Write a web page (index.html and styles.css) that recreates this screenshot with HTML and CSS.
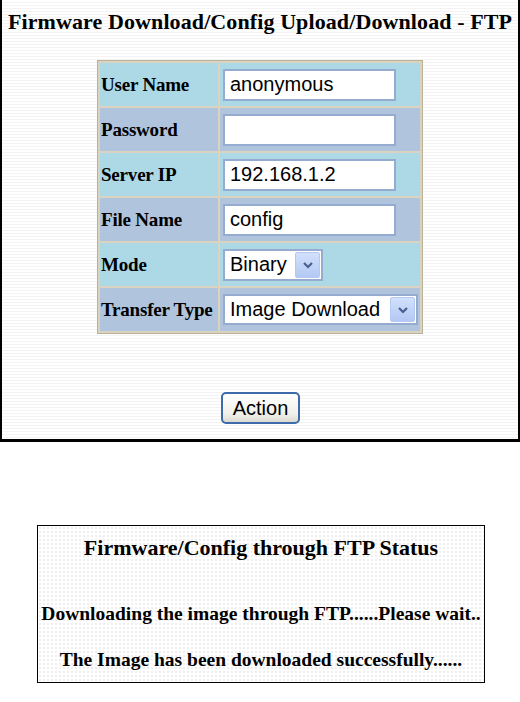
FILE: index.html
```html
<!DOCTYPE html>
<html>
<head>
<meta charset="utf-8">
<title>Firmware FTP</title>
<link rel="stylesheet" href="styles.css">
</head>
<body>
<div class="panel">
  <h1 class="title">Firmware Download/Config Upload/Download - FTP</h1>
  <table class="form">
    <tr class="odd"><td class="lbl">User Name</td><td class="val"><input class="txt" type="text" value="anonymous"></td></tr>
    <tr class="even"><td class="lbl">Password</td><td class="val"><input class="txt" type="password" value=""></td></tr>
    <tr class="odd"><td class="lbl">Server IP</td><td class="val"><input class="txt" type="text" value="192.168.1.2"></td></tr>
    <tr class="even"><td class="lbl">File Name</td><td class="val"><input class="txt" type="text" value="config"></td></tr>
    <tr class="odd"><td class="lbl">Mode</td><td class="val">
      <div class="sel sel-mode"><span class="sel-text">Binary</span><span class="arrow"><svg width="12" height="8" viewBox="0 0 12 8"><path d="M2 2 L6 6 L10 2" fill="none" stroke="#4a5f8c" stroke-width="2.2"/></svg></span></div>
    </td></tr>
    <tr class="even"><td class="lbl">Transfer Type</td><td class="val">
      <div class="sel sel-type"><span class="sel-text">Image Download</span><span class="arrow"><svg width="12" height="8" viewBox="0 0 12 8"><path d="M2 2 L6 6 L10 2" fill="none" stroke="#4a5f8c" stroke-width="2.2"/></svg></span></div>
    </td></tr>
  </table>
  <div class="actions"><button class="btn" type="button">Action</button></div>
</div>

<div class="status">
  <h2 class="status-title">Firmware/Config through FTP Status</h2>
  <p class="msg msg-first">Downloading the image through FTP......Please wait..</p>
  <p class="msg msg-second">The Image has been downloaded successfully......</p>
</div>
</body>
</html>
```

FILE: styles.css
```css
html, body {
  margin: 0;
  padding: 0;
  background: #ffffff;
}

body {
  width: 520px;
  height: 702px;
  font-family: "Liberation Serif", "Times New Roman", serif;
  color: #000;
}

.panel {
  width: 520px;
  box-sizing: border-box;
  border-left: 2px solid #000;
  border-right: 2px solid #000;
  border-bottom: 3px solid #000;
  padding: 9px 0 15px;
  background: repeating-linear-gradient(to bottom, #ffffff 0, #ffffff 2px, #f3f3f3 2px, #f3f3f3 3px);
}

.title {
  margin: 0;
  font-size: 22px;
  line-height: 26px;
  font-weight: bold;
  letter-spacing: 0.1px;
  text-align: center;
  white-space: nowrap;
}

.form {
  margin: 25px auto 0;
  border-collapse: separate;
  border-spacing: 2px;
  background: #d9d3bf;
  border: 1px solid #b9b199;
  width: 326px;
  box-sizing: border-box;
}

.form td {
  height: 43px;
  padding: 0;
  box-sizing: border-box;
}

.odd td { background: #add8e6; }
.even td { background: #b0c4de; }

.lbl {
  width: 118px;
  padding-left: 1px !important;
  font-weight: bold;
  font-size: 19px;
  letter-spacing: -0.2px;
  white-space: nowrap;
}

.val {
  padding-left: 3px !important;
}

.txt {
  display: block;
  box-sizing: border-box;
  width: 173px;
  height: 32px;
  margin: 0;
  border: 2px solid #95abcf;
  background: #fff;
  font-family: "Liberation Sans", Arial, sans-serif;
  font-size: 20px;
  padding: 0 5px;
  color: #000;
  outline: none;
}

.sel {
  display: flex;
  align-items: center;
  box-sizing: border-box;
  height: 32px;
  border: 2px solid #95abcf;
  background: #fff;
  font-family: "Liberation Sans", Arial, sans-serif;
  font-size: 20px;
  padding: 0 1px 0 5px;
}

.sel-mode { width: 100px; }
.sel-type { width: 195px; height: 31px; }

.sel-text {
  flex: 1;
  white-space: nowrap;
}

.arrow {
  display: flex;
  align-items: center;
  justify-content: center;
  width: 25px;
  height: 26px;
  box-sizing: border-box;
  border: 1px solid #b4c8f4;
  border-radius: 2px;
  background: linear-gradient(to bottom, #d2e0fc, #b3c8f3);
}

.sel-type .arrow { height: 25px; }

.actions {
  display: flex;
  justify-content: center;
  margin-top: 58px;
}

.btn {
  width: 79px;
  height: 32px;
  box-sizing: border-box;
  border: 2px solid #3d6aa8;
  border-radius: 5px;
  background: linear-gradient(to bottom, #ffffff, #f1f0ea 70%, #dcdad2);
  font-family: "Liberation Sans", Arial, sans-serif;
  font-size: 20px;
  color: #000;
  padding: 0;
  margin-left: 1px;
}

.status {
  width: 448px;
  height: 158px;
  box-sizing: border-box;
  margin: 83px 0 0 37px;
  border: 1px solid #000;
  padding-top: 10px;
  text-align: center;
  background-color: #fff;
  background-image: radial-gradient(circle, #e6e6e6 0.6px, transparent 0.9px);
  background-size: 4px 4px;
}

.status-title {
  margin: 0;
  font-size: 22px;
  line-height: 24px;
  font-weight: bold;
  white-space: nowrap;
}

.msg {
  margin: 0;
  font-size: 19.5px;
  line-height: 24px;
  font-weight: bold;
  white-space: nowrap;
}

.msg-first { margin-top: 42px; }
.msg-second { margin-top: 22px; }
```
